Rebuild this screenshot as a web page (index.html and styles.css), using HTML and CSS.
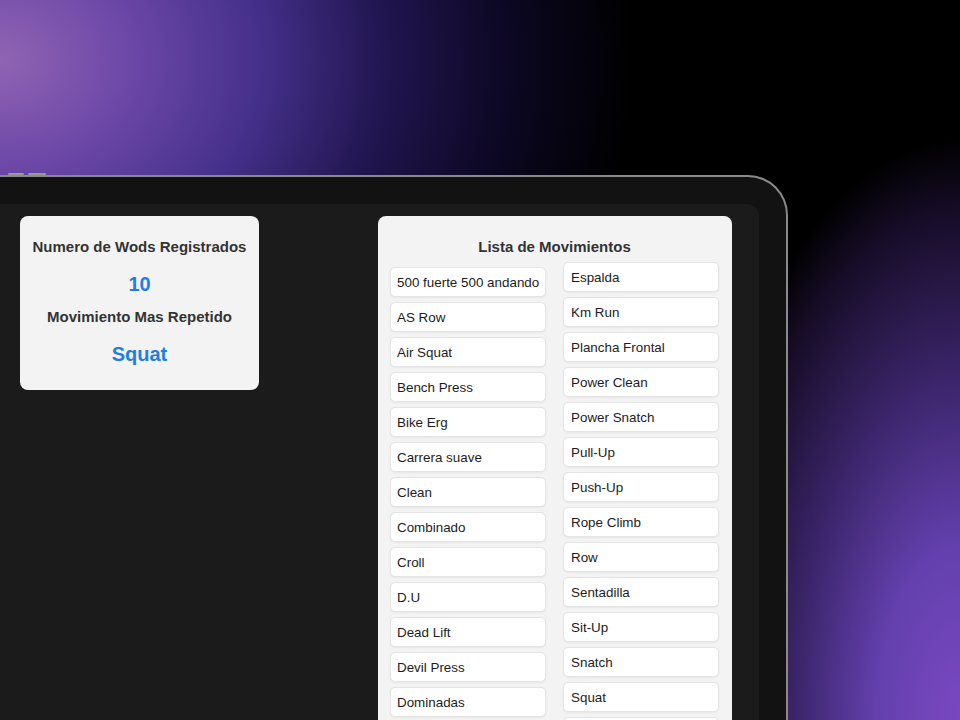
FILE: index.html
```html
<!DOCTYPE html>
<html lang="es">
<head>
<meta charset="utf-8">
<title>Wods</title>
<link rel="stylesheet" href="styles.css">
</head>
<body>
<div class="device">
  <div class="buttons"><span class="btn"></span><span class="btn"></span></div>
  <div class="screen">
    <section class="card stats">
      <h3 class="label">Numero de Wods Registrados</h3>
      <p class="value">10</p>
      <h3 class="label">Movimiento Mas Repetido</h3>
      <p class="value">Squat</p>
    </section>
    <section class="card list">
      <h3 class="label">Lista de Movimientos</h3>
      <div class="cols">
        <ul class="col col-left">
          <li>500 fuerte 500 andando</li>
          <li>AS Row</li>
          <li>Air Squat</li>
          <li>Bench Press</li>
          <li>Bike Erg</li>
          <li>Carrera suave</li>
          <li>Clean</li>
          <li>Combinado</li>
          <li>Croll</li>
          <li>D.U</li>
          <li>Dead Lift</li>
          <li>Devil Press</li>
          <li>Dominadas</li>
        </ul>
        <ul class="col col-right">
          <li>Espalda</li>
          <li>Km Run</li>
          <li>Plancha Frontal</li>
          <li>Power Clean</li>
          <li>Power Snatch</li>
          <li>Pull-Up</li>
          <li>Push-Up</li>
          <li>Rope Climb</li>
          <li>Row</li>
          <li>Sentadilla</li>
          <li>Sit-Up</li>
          <li>Snatch</li>
          <li>Squat</li>
          <li class="peek" aria-hidden="true"></li>
        </ul>
      </div>
    </section>
  </div>
</div>
</body>
</html>
```
FILE: styles.css
```css
html, body {
  margin: 0;
  padding: 0;
}
body {
  width: 960px;
  height: 720px;
  overflow: hidden;
  font-family: "Liberation Sans", Arial, sans-serif;
  background-color: #000;
  background-image:
    radial-gradient(ellipse 280px 580px at 100% 100%, #7a48c2 0%, #6340ad 30%, #3a2468 60%, #160c26 88%, rgba(0,0,0,0) 100%),
    radial-gradient(ellipse 690px 560px at 0 60px, #9064b4 0%, #6a46a6 20%, #44308a 38%, #21154f 56%, #0c0722 74%, #000 92%);
}
.device {
  position: relative;
  margin: 175px 0 0 -30px;
  width: 818px;
  height: 560px;
  box-sizing: border-box;
  padding: 27px 27px 0 27px;
  background: #121212;
  border: 2px solid #8a8a8a;
  border-bottom: none;
  border-radius: 0 40px 0 0;
}
.buttons {
  position: absolute;
  top: -4px;
  left: 36px;
  display: flex;
  gap: 4px;
}
.btn {
  width: 16px;
  height: 2px;
  background: #9a9a9a;
  border-radius: 1px;
}
.btn + .btn {
  width: 18px;
}
.screen {
  height: 100%;
  box-sizing: border-box;
  background: #1b1b1b;
  border-radius: 0 12px 0 0;
  padding: 12px 27px 0 21px;
  display: flex;
  justify-content: space-between;
  align-items: flex-start;
}
.card {
  background: #f3f3f3;
  border-radius: 8px;
  box-sizing: border-box;
  text-align: center;
}
.stats {
  width: 239px;
  padding: 22px 10px 24px;
}
.label {
  margin: 0;
  font-size: 15px;
  line-height: 18px;
  font-weight: bold;
  color: #333;
}
.value {
  margin: 16px 0 12px;
  font-size: 20px;
  line-height: 24px;
  font-weight: bold;
  color: #1f7fe0;
}
.value:last-child {
  margin-bottom: 0;
}
.list {
  width: 354px;
  padding: 22px 13px 20px 12px;
}
.cols {
  display: flex;
  gap: 17px;
  margin-top: 6px;
}
.col {
  list-style: none;
  margin: 0;
  padding: 0;
  width: 156px;
  display: flex;
  flex-direction: column;
  gap: 5px;
}
.col-left {
  margin-top: 5px;
}
.col li {
  height: 30px;
  box-sizing: border-box;
  display: flex;
  align-items: center;
  padding: 0 5px 0 6px;
  background: #fff;
  border: 1px solid #e4e4e4;
  border-radius: 5px;
  box-shadow: 0 1px 2px rgba(0,0,0,0.05);
  font-size: 13.4px;
  color: #1c1c1c;
  white-space: nowrap;
  text-align: left;
}
.col-right li {
  padding-left: 7px;
}
```
